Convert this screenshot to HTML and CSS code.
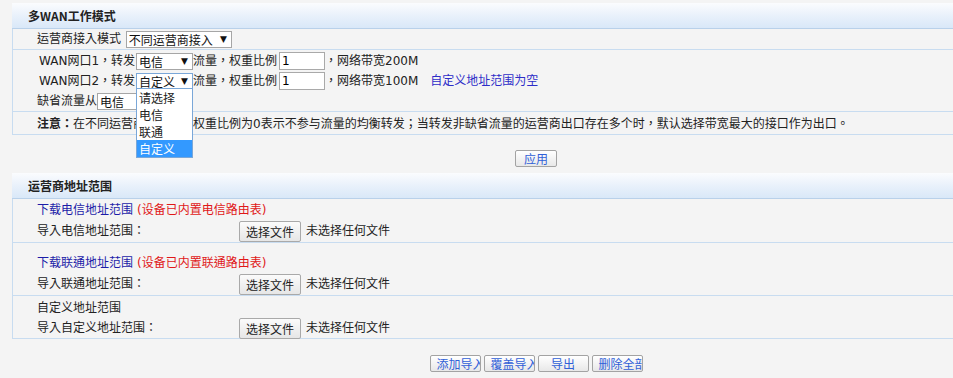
FILE: index.html
```html
<!DOCTYPE html>
<html>
<head>
    <title>多WAN工作模式</title>
    <link rel="stylesheet" href="styles.css">
</head>
<body>
    <div class="page">
        <div class="panel-head">多WAN工作模式</div>
        <div class="tbl">
            <div class="row">
                运营商接入模式
                <span class="sel sel-mode"><select><option>不同运营商接入</option></select></span>
            </div>
            <div class="row lines">
                <div class="line wan">WAN网口1，转发<span class="sel sel-isp"><select><option>电信</option></select></span>流量，权重比例 <input type="text" value="1">，网络带宽200M</div>
                <div class="line wan">WAN网口2，转发<span class="sel sel-isp focus"><select><option>自定义</option></select>
                    <ul class="dropdown">
                        <li>请选择</li>
                        <li>电信</li>
                        <li>联通</li>
                        <li class="on">自定义</li>
                    </ul></span>流量，权重比例 <input type="text" value="1">，网络带宽100M<a class="link" href="#">自定义地址范围为空</a></div>
                <div class="line">缺省流量从<span class="sel sel-def"><select><option>电信</option></select></span></div>
            </div>
            <div class="row note"><b>注意：</b>在不同运营商接入时，权重比例为0表示不参与流量的均衡转发；当转发非缺省流量的运营商出口存在多个时，默认选择带宽最大的接口作为出口。</div>
        </div>
        <div class="actions apply"><button class="btn">应用</button></div>

        <div class="panel-head">运营商地址范围</div>
        <div class="tbl">
            <div class="row group">
                <div class="line"><a class="dl" href="#">下载电信地址范围</a><span class="warn">(设备已内置电信路由表)</span></div>
                <div class="line file"><span class="lbl">导入电信地址范围：</span><button class="pick">选择文件</button>未选择任何文件</div>
            </div>
            <div class="row group second">
                <div class="line"><a class="dl" href="#">下载联通地址范围</a><span class="warn">(设备已内置联通路由表)</span></div>
                <div class="line file"><span class="lbl">导入联通地址范围：</span><button class="pick">选择文件</button>未选择任何文件</div>
            </div>
            <div class="row group custom">
                <div class="line">自定义地址范围</div>
                <div class="line file"><span class="lbl">导入自定义地址范围：</span><button class="pick">选择文件</button>未选择任何文件</div>
            </div>
        </div>
        <div class="actions bottom">
            <button class="btn small">添加导入</button>
            <button class="btn small">覆盖导入</button>
            <button class="btn small">导出</button>
            <button class="btn small">删除全部</button>
        </div>
    </div>
</body>
</html>
```

FILE: styles.css
```css
html, body {
    margin: 0;
    background-color: #f4f4f4;
    overflow: hidden;
}
body {
    font-family: "DejaVu Sans", "Noto Sans CJK TC", sans-serif;
    font-size: 12px;
    color: #222;
}
.page {
    width: 1048px;
    margin: 3px 0 0 12px;
}
.panel-head {
    height: 25px;
    line-height: 25px;
    padding-left: 16px;
    font-family: "Noto Sans CJK SC", sans-serif;
    font-weight: bold;
    font-size: 12px;
    background: linear-gradient(#fbfcfe, #e9f1fb 50%, #d9e8f8);
    border-bottom: 1px solid #b9d1ea;
}
.tbl {
    border-left: 1px solid #c8dcf0;
    border-right: 1px solid #c8dcf0;
}
.row {
    padding: 0 0 0 24px;
    min-height: 20px;
    line-height: 20px;
    border-bottom: 1px solid #c8dcf0;
}
.row.lines {
    padding-top: 1px;
}
.row.note {
    padding-top: 2px;
}
.line {
    height: 20px;
    display: flex;
    align-items: center;
}
.row.group {
    padding-top: 1px;
}
.row.group.second {
    padding-top: 10px;
}
.row.group.custom {
    padding-top: 2px;
}
.line.file {
    height: 22px;
}
.row.custom .line.file {
    height: 20px;
}
.wan {
    padding-left: 2px;
}
.sel {
    position: relative;
    display: inline-block;
    height: 17px;
    box-sizing: border-box;
    border: 1px solid #a6a6a6;
    background: #fff;
    margin-left: 1px;
}
.sel::after {
    content: "\25BC";
    position: absolute;
    right: 4px;
    top: 0;
    font-size: 9px;
    line-height: 15px;
    color: #111;
}
.sel select {
    appearance: none;
    -webkit-appearance: none;
    border: none;
    background: transparent;
    font-family: "Noto Sans CJK SC", sans-serif;
    font-size: 12px;
    color: #111;
    height: 15px;
    padding: 0 0 0 2px;
    margin: 0;
    outline: none;
    display: block;
    line-height: 15px;
}
.sel-mode {
    width: 106px;
    vertical-align: middle;
}
.sel-isp {
    width: 57px;
}
.sel-def {
    width: 60px;
    margin-left: 0;
}
.sel.focus {
    border-color: #7aa7d8;
}
.dropdown {
    position: absolute;
    left: -1px;
    top: 14px;
    width: 57px;
    box-sizing: border-box;
    margin: 0;
    padding: 0;
    list-style: none;
    background: #fff;
    border: 1px solid #7aa7d8;
    z-index: 2;
    font-family: "Noto Sans CJK SC", sans-serif;
}
.dropdown li {
    height: 17px;
    line-height: 17px;
    padding-left: 2px;
}
.dropdown li.on {
    background-color: #3399ff;
    color: #fff;
}
input[type="text"] {
    width: 46px;
    height: 18px;
    box-sizing: border-box;
    border: 1px solid #a9a9a9;
    padding: 0 2px;
    font-size: 12px;
    font-family: "DejaVu Sans", sans-serif;
    margin: 0 0 0 2px;
}
.link {
    color: #2d2dc8;
    text-decoration: none;
    margin-left: 12px;
}
.dl {
    color: #1c1ca8;
    text-decoration: none;
}
.warn {
    color: #e01818;
    margin-left: 4px;
}
.lbl {
    display: inline-block;
    width: 202px;
}
.pick {
    height: 21px;
    padding: 0 6px;
    margin-right: 5px;
    font-family: "Noto Sans CJK SC", sans-serif;
    font-size: 12px;
    color: #222;
    background: linear-gradient(#fbfbfb, #e6e6e6);
    border: 1px solid #a9a9a9;
    border-radius: 2px;
}
.actions {
    display: flex;
    justify-content: center;
    gap: 3px;
}
.apply {
    padding: 15px 0 6px;
}
.bottom {
    padding: 16px 0;
}
.btn {
    height: 17px;
    padding: 0 8px;
    font-family: "Noto Sans CJK SC", sans-serif;
    font-size: 12px;
    line-height: 15px;
    color: #3060d8;
    background: linear-gradient(#ffffff, #e8e8e8);
    border: 1px solid #a3a3a3;
    border-radius: 2px;
    white-space: nowrap;
    overflow: hidden;
}
.btn.small {
    width: 51px;
    padding: 0 6px;
}
```
